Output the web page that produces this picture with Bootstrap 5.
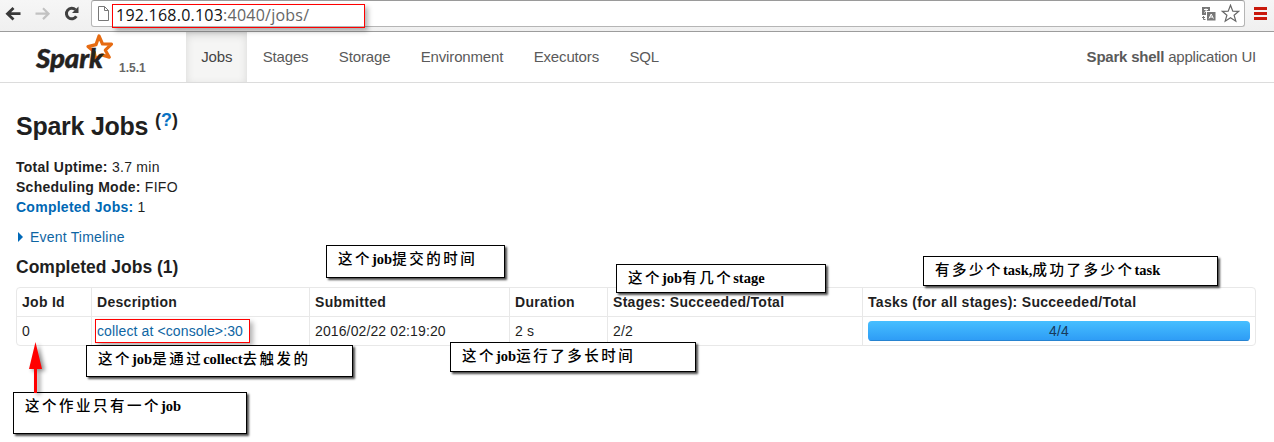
<!DOCTYPE html>
<html lang="zh-CN">
<head>
<meta charset="utf-8">
<meta name="viewport" content="width=device-width, initial-scale=1">
<title>Spark shell - Spark Jobs</title>
<link href="https://cdn.jsdelivr.net/npm/bootstrap@5.3.0/dist/css/bootstrap.min.css" rel="stylesheet">
<style>
body{font:14px/20px "Liberation Sans",Arial,sans-serif;color:#1f1f1f;background:#fff;height:442px;overflow:hidden;letter-spacing:.2px}
a{color:#0e65a3;text-decoration:none}
.toolbar{height:32px;background:linear-gradient(#f6f6f6,#f0f0f0);border-bottom:1px solid #9c9c9c;padding-left:4px}
.toolbar svg{display:block;flex:none}
.address{height:27px;width:1154px;margin-left:9px;border:1px solid #b5b5b5;border-top-color:#9a9a9a;border-radius:3px;background:#fff;font:16px/25px "Open Sans",sans-serif;color:#666;padding-left:5px}
.address .url{margin-left:6px;padding-top:3px;color:#111;letter-spacing:.23px}
.address .url span{color:#666}
.mainbar{height:51px;padding:0;border-bottom:1px solid #dcdcdc;font-size:15px;letter-spacing:-.15px}
.mainbar .brandbox{width:186px;height:50px;padding:0 0 0 33px;margin:0}
.mainbar .navbar-nav .nav-link{padding:15px 15.200px;line-height:20px;color:#5a5a5a}
.mainbar .navbar-nav .nav-link.active{color:#444;background:#f5f5f4;box-shadow:inset 0 3px 8px rgba(0,0,0,.125)}
.version{font-weight:bold;font-size:12px;color:#666;letter-spacing:0}
.content{padding:23px 0 0 16px}
.page-title{font-size:25px;line-height:40px;font-weight:bold;letter-spacing:-.25px;margin:0 0 11px}
.page-title sup{font-size:18px;top:-.5em;line-height:0;letter-spacing:0}
.page-title sup a{color:#0873c4}
.summary{letter-spacing:.26px}
.summary a{color:#0068b4}
.timeline{margin:10px 0}
.appname{padding:15px 18px 0 0;color:#5a5a5a;letter-spacing:-.22px}
.section-title{font-size:17.5px;line-height:20px;font-weight:bold;letter-spacing:0;margin:0}
.caret{width:0;height:0;border:5px solid transparent;border-left-color:#0069b8;border-right:0;margin:0 7px 0 2px}
.jobs{width:1240px;table-layout:fixed;border:1px solid #e8e8e8;border-collapse:separate;border-spacing:0;border-radius:4px;margin:10px 0 0;color:#1f1f1f}
.jobs>:not(caption)>*>*{padding:4px 5px;border:0;border-left:1px solid #e8e8e8;height:28px;white-space:nowrap;background:none;box-shadow:none}
.jobs>:not(caption)>*>:first-child{border-left:0}
.jobs>tbody>tr>td{border-top:1px solid #e8e8e8;height:29px;letter-spacing:.12px}
.jobs>thead>tr>th{letter-spacing:.29px}
.jobs .progress{height:20px;border-radius:4px;font-size:14px;--bs-progress-bar-color:#173a5c}
.jobs .progress-bar{background:linear-gradient(#46bfff,#2d9bf5);box-shadow:inset 0 -1px #2683d0}
.note{position:absolute;background:#fff;border:1px solid #000;box-shadow:2px 2px 2px rgba(0,0,0,.7);padding-left:11px;color:#000;font:500 14.5px/24px "Noto Sans CJK SC",sans-serif;letter-spacing:2.5px;white-space:nowrap}
.note b{font:bold 14.5px/20px "Liberation Serif",serif;letter-spacing:0}
.n1{left:326px;top:245px;width:179px;height:33px}
.n2{left:616px;top:264px;width:210px;height:29px}
.n3{left:923px;top:256px;width:295px;height:30px}
.n4{left:86px;top:345px;width:267px;height:32px}
.n5{left:450px;top:342px;width:246px;height:30px}
.n6{left:13px;top:392px;width:234px;height:42px}
.frame{position:absolute;border:1px solid #f00;box-shadow:3px 3px 5px rgba(0,0,0,.3)}
.f1{left:112px;top:4px;width:253px;height:24px}
.f2{left:95px;top:319px;width:155px;height:24px}
.pointer{position:absolute;left:26px;top:342px;filter:drop-shadow(3px 2px 2px rgba(0,0,0,.45))}
</style>
<script src="https://cdn.jsdelivr.net/npm/bootstrap@5.3.0/dist/js/bootstrap.bundle.min.js"></script>
</head>
<body class="position-relative">
<header class="toolbar d-flex">
  <svg width="78" height="30" fill="none">
    <path d="M3 13.700H16.500M9.500 8L3.500 13.700l6 5.700" stroke="#383838" stroke-width="2.800"/>
    <path d="M31.500 13.700h13M39 8.300l5.500 5.400-5.500 5.400" stroke="#c2c2c2" stroke-width="2.200"/>
    <path d="M71.500 9.800A5.300 5.300 0 1 0 72.300 16.300" stroke="#404040" stroke-width="3"/>
    <path d="M74.500 6.500v6.500h-6.500z" fill="#404040"/>
  </svg>
  <div class="address d-flex align-items-center">
    <svg width="13" height="17" fill="none" stroke="#777"><path d="M1.500 1.500h6l4 4v10h-10zM7.500 1.500v4h4"/></svg>
    <span class="url">192.168.0.103<span>:4040/jobs/</span></span>
    <svg class="ms-auto" width="16" height="16"><path d="M1 1h8v4H5v4H1zM6 6h8.500v8.500H6z" fill="#777"/><path d="M3 3.500h4M5 2.500v1M3.500 6.500l2.500-3" fill="none" stroke="#fff"/><path d="M8 12.500l2.200-4.500 2.200 4.500M9 11h2.600" fill="none" stroke="#fff"/><path d="M1 11.500h3M2.500 10v3.500h2" fill="none" stroke="#777"/></svg>
    <svg class="ms-1 me-1" width="19" height="19" fill="#fff" stroke="#666" stroke-width="1.200"><path d="M9.500 1.200l2.300 5.900 6 .2-4.700 3.900 1.700 6-5.300-3.400-5.300 3.400 1.700-6L1.200 7.300l6-.2z"/></svg>
  </div>
  <svg class="ms-2" width="16" height="28"><path d="M1 8.500h13M1 13.500h13M1 18.500h13" stroke="#c9190c" stroke-width="3"/></svg>
</header>
<nav class="navbar navbar-expand mainbar align-items-start">
  <a class="navbar-brand brandbox d-flex" href="#">
    <svg width="82" height="48">
      <path d="M66 4l3.500 8 9 .2-6.200 6 4 7-7.300-2.300-6.500 4-1.300-7-6.200-5.300 8-2z" fill="#fff" stroke="#e66b12" stroke-width="3.200" stroke-linejoin="round"/>
      <text x="3" y="36" font-family="Lato,sans-serif" font-size="27" font-weight="900" font-style="italic" fill="#24221f" stroke="#24221f" stroke-width=".4" textLength="67" lengthAdjust="spacingAndGlyphs">Spark</text>
    </svg>
    <span class="version align-self-end mb-1 ms-1">1.5.1</span>
  </a>
  <ul class="navbar-nav">
    <li class="nav-item"><a class="nav-link active" href="#">Jobs</a></li>
    <li class="nav-item"><a class="nav-link" href="#">Stages</a></li>
    <li class="nav-item"><a class="nav-link" href="#">Storage</a></li>
    <li class="nav-item"><a class="nav-link" href="#">Environment</a></li>
    <li class="nav-item"><a class="nav-link" href="#">Executors</a></li>
    <li class="nav-item"><a class="nav-link" href="#">SQL</a></li>
  </ul>
  <p class="ms-auto mb-0 appname"><strong>Spark shell</strong> application UI</p>
</nav>
<main class="content">
  <h3 class="page-title">Spark Jobs <sup>(<a href="#">?</a>)</sup></h3>
  <ul class="list-unstyled mb-0 summary">
    <li><strong>Total Uptime:</strong> 3.7 min</li>
    <li><strong>Scheduling Mode:</strong> FIFO</li>
    <li><a href="#"><strong>Completed Jobs:</strong></a> 1</li>
  </ul>
  <a class="timeline d-flex align-items-center" href="#"><span class="caret"></span>Event Timeline</a>
  <h4 class="section-title">Completed Jobs (1)</h4>
  <table class="table jobs">
    <colgroup><col style="width:74px"><col style="width:218px"><col style="width:200px"><col style="width:98px"><col style="width:255px"><col></colgroup>
    <thead><tr><th>Job Id</th><th>Description</th><th>Submitted</th><th>Duration</th><th>Stages: Succeeded/Total</th><th>Tasks (for all stages): Succeeded/Total</th></tr></thead>
    <tbody><tr><td>0</td><td><a href="#">collect at &lt;console&gt;:30</a></td><td>2016/02/22 02:19:20</td><td>2 s</td><td>2/2</td><td><div class="progress"><div class="progress-bar w-100">4/4</div></div></td></tr></tbody>
  </table>
</main>
<div class="frame f1"></div>
<div class="frame f2"></div>
<div class="note n1">这个<b>job</b>提交的时间</div>
<div class="note n2">这个<b>job</b>有几个<b>stage</b></div>
<div class="note n3">有多少个<b>task,</b>成功了多少个<b>task</b></div>
<div class="note n4">这个<b>job</b>是通过<b>collect</b>去触发的</div>
<div class="note n5">这个<b>job</b>运行了多长时间</div>
<div class="note n6">这个作业只有一个<b>job</b></div>
<svg class="pointer" width="20" height="52"><path d="M9.500 0L16 27h-5v24H8V27H3z" fill="#f00"/></svg>
</body>
</html>
